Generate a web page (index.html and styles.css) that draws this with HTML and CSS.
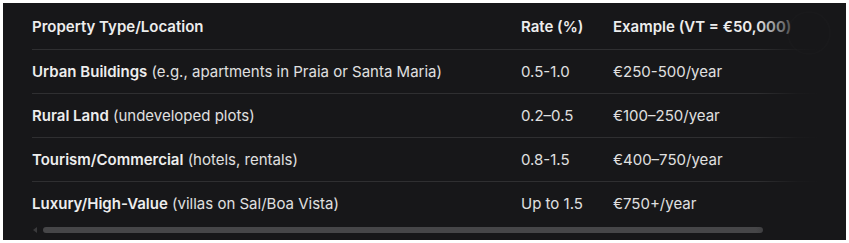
FILE: index.html
```html
<!DOCTYPE html>
<html>
<head>
<meta charset="utf-8">
<link rel="stylesheet" href="styles.css">
</head>
<body>
<div class="frame">
  <div class="table">
    <div class="row head">
      <div class="c1">Property Type/Location</div>
      <div class="c2">Rate (%)</div>
      <div class="c3">Example (VT = €50,000)</div>
    </div>
    <div class="row">
      <div class="c1"><b>Urban Buildings</b> (e.g., apartments in Praia or Santa Maria)</div>
      <div class="c2">0.5-1.0</div>
      <div class="c3">€250-500/year</div>
    </div>
    <div class="row">
      <div class="c1"><b>Rural Land</b> (undeveloped plots)</div>
      <div class="c2">0.2–0.5</div>
      <div class="c3">€100–250/year</div>
    </div>
    <div class="row">
      <div class="c1"><b>Tourism/Commercial</b> (hotels, rentals)</div>
      <div class="c2">0.8-1.5</div>
      <div class="c3">€400–750/year</div>
    </div>
    <div class="row last">
      <div class="c1"><b>Luxury/High-Value</b> (villas on Sal/Boa Vista)</div>
      <div class="c2">Up to 1.5</div>
      <div class="c3">€750+/year</div>
    </div>
  </div>
  <div class="scrollbar">
    <span class="arrow"></span>
    <span class="thumb"></span>
  </div>
  <div class="fade"></div>
  <div class="ring"></div>
</div>
</body>
</html>
```
FILE: styles.css
```css
html, body {
  margin: 0;
  padding: 0;
  background: #ffffff;
}
body {
  padding: 3px;
  width: 843px;
  height: 237px;
  overflow: hidden;
}
.frame {
  position: relative;
  background: #171719;
  height: 237px;
  overflow: hidden;
  font-family: Inter, "Noto Sans", sans-serif;
  font-size: 15px;
  color: #e0e0e0;
  display: flex;
  flex-direction: column;
}
.table {
  margin-left: 29px;
  width: 800px;
  display: flex;
  flex-direction: column;
}
.row {
  display: grid;
  grid-template-columns: 489px 92px 1fr;
  align-items: center;
  height: 43px;
  border-bottom: 1px solid #2f2f31;
}
.row.head {
  height: 46px;
  font-weight: 600;
  color: #ededed;
}
.row.last {
  border-bottom: none;
}
.row b {
  font-weight: 600;
  color: #ededed;
}
.c1, .c2, .c3 {
  white-space: nowrap;
}
.scrollbar {
  display: flex;
  align-items: center;
  margin-left: 30px;
  height: 10px;
  gap: 6px;
}
.arrow {
  width: 0;
  height: 0;
  border-top: 3px solid transparent;
  border-bottom: 3px solid transparent;
  border-right: 4px solid #3a3a3c;
}
.thumb {
  width: 720px;
  height: 6px;
  border-radius: 3px;
  background: #464648;
}
.fade {
  position: absolute;
  top: 0;
  right: 0;
  bottom: 0;
  width: 90px;
  background: linear-gradient(to right, rgba(23,23,25,0) 0%, rgba(23,23,25,0.85) 45%, #171719 70%);
}
.ring {
  position: absolute;
  top: 8px;
  left: 784px;
  width: 40px;
  height: 40px;
  border-radius: 50%;
  border: 2px solid rgba(255,255,255,0.012);
}
```
